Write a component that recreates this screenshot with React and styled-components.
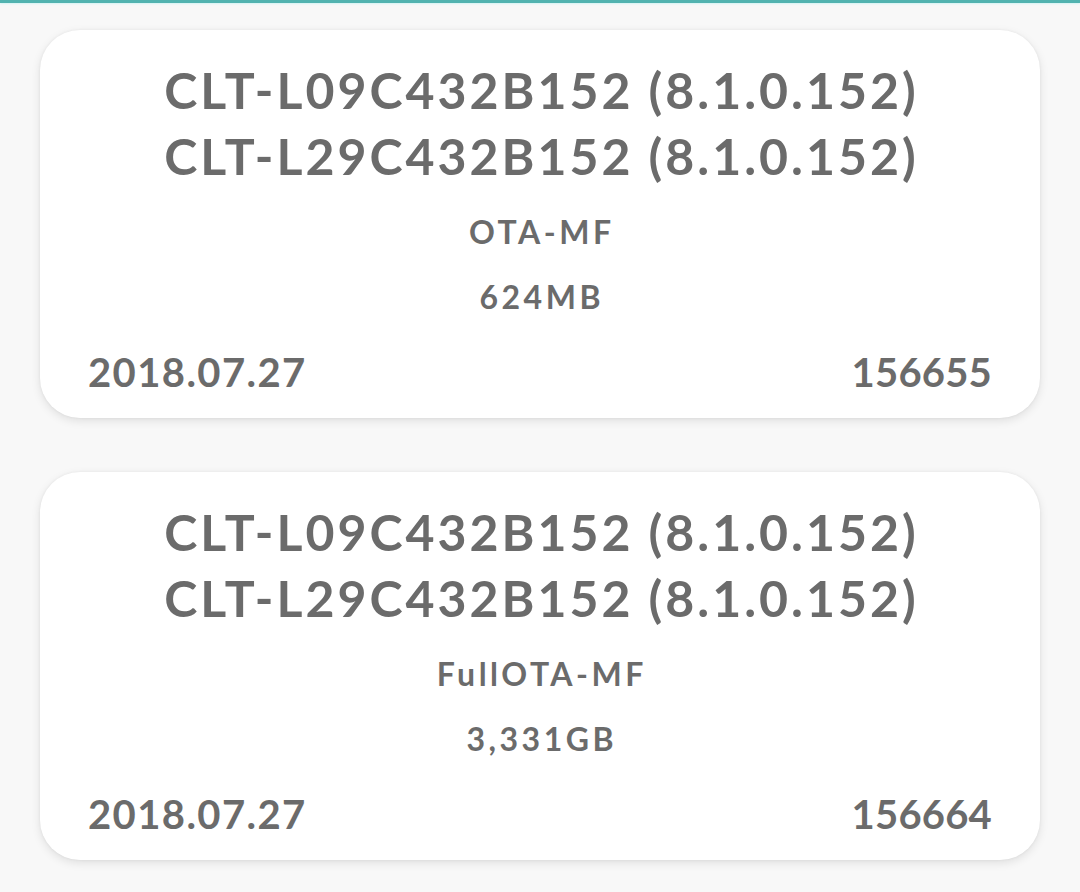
import React from "react";
import styled, { createGlobalStyle } from "styled-components";

const Global = createGlobalStyle`
  html, body { margin: 0; padding: 0; background: #f8f8f8; }
  body { font-family: "Lato", "Noto Sans", sans-serif; }
`;

const Page = styled.div`
  width: 1080px;
  min-height: 892px;
  background: #f8f8f8;
  box-sizing: border-box;
`;

const TopBar = styled.div`
  height: 3px;
  background: #52b3b0;
  box-shadow: 0 1px 2px #d6f4f4;
`;

const List = styled.div`
  display: flex;
  flex-direction: column;
  gap: 54px;
  padding: 27px 40px 0;
`;

const Card = styled.div`
  background: #ffffff;
  border-radius: 40px;
  height: 388px;
  box-sizing: border-box;
  padding: 27px 48px 21px 48px;
  display: flex;
  flex-direction: column;
  align-items: center;
  box-shadow: 0 3px 10px rgba(0, 0, 0, 0.10), 0 0 3px rgba(0, 0, 0, 0.06);
  color: #6b6b6b;
`;

const Title = styled.div`
  font-size: 50px;
  line-height: 66px;
  font-weight: 700;
  text-align: center;
  letter-spacing: 3px;
  padding-left: 3px;
  white-space: nowrap;
`;

const Info = styled.div`
  font-size: 32px;
  line-height: 44px;
  font-weight: 700;
  margin-top: ${(p) => p.$gap}px;
  letter-spacing: 3.5px;
  padding-left: 3.5px;
`;

const Footer = styled.div`
  align-self: stretch;
  display: flex;
  justify-content: space-between;
  margin-top: 28px;
  font-size: 40px;
  line-height: 50px;
  font-weight: 700;
`;

const FooterText = styled.span`
  letter-spacing: ${(p) => p.$spacing}px;
`;

const items = [
  {
    titles: ["CLT-L09C432B152 (8.1.0.152)", "CLT-L29C432B152 (8.1.0.152)"],
    type: "OTA-MF",
    size: "624MB",
    date: "2018.07.27",
    id: "156655",
  },
  {
    titles: ["CLT-L09C432B152 (8.1.0.152)", "CLT-L29C432B152 (8.1.0.152)"],
    type: "FullOTA-MF",
    size: "3,331GB",
    date: "2018.07.27",
    id: "156664",
  },
];

export default function App() {
  return (
    <Page>
      <Global />
      <TopBar />
      <List>
        {items.map((it, i) => (
          <Card key={i}>
            {it.titles.map((t) => (
              <Title key={t}>{t}</Title>
            ))}
            <Info $gap={21}>{it.type}</Info>
            <Info $gap={21}>{it.size}</Info>
            <Footer>
              <FooterText $spacing={1.4}>{it.date}</FooterText>
              <FooterText $spacing={0.2}>{it.id}</FooterText>
            </Footer>
          </Card>
        ))}
      </List>
    </Page>
  );
}
